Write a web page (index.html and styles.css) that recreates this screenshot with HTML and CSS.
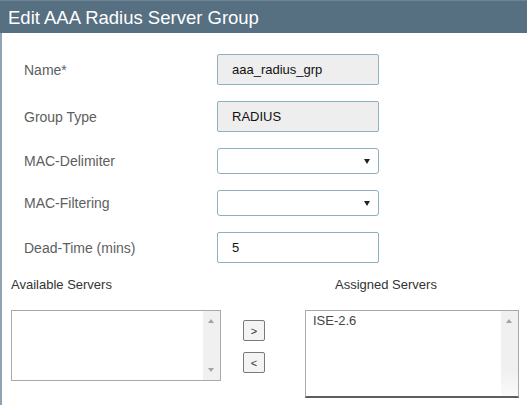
FILE: index.html
```html
<!DOCTYPE html>
<html lang="en">
<head>
    <meta charset="UTF-8">
    <title>Edit AAA Radius Server Group</title>
    <link rel="stylesheet" href="styles.css">
</head>
<body>
<div class="dialog">
    <div class="title">Edit AAA Radius Server Group</div>
    <div class="content">
        <form class="fields" action="#">
            <label for="name">Name*</label>
            <input class="field locked" id="name" type="text" value="aaa_radius_grp" readonly>

            <label for="groupType">Group Type</label>
            <input class="field locked" id="groupType" type="text" value="RADIUS" readonly>

            <label for="macDelimiter">MAC-Delimiter</label>
            <div class="select-wrap">
                <select class="select" id="macDelimiter"><option></option></select>
            </div>

            <label for="macFiltering">MAC-Filtering</label>
            <div class="select-wrap">
                <select class="select" id="macFiltering"><option></option></select>
            </div>

            <label for="deadTime">Dead-Time (mins)</label>
            <input class="field" id="deadTime" type="text" value="5">
        </form>

        <div class="servers">
            <div class="col-left">
                <p class="list-title">Available Servers</p>
                <div class="listbox short">
                    <div class="items"></div>
                    <div class="scrollbar">
                        <span class="arrow up"></span>
                        <span class="arrow down"></span>
                    </div>
                </div>
            </div>
            <div class="col-mid">
                <button class="move" type="button">&gt;</button>
                <button class="move" type="button">&lt;</button>
            </div>
            <div class="col-right">
                <p class="list-title assigned">Assigned Servers</p>
                <div class="listbox tall">
                    <div class="items">
                        <div class="item">ISE-2.6</div>
                    </div>
                    <div class="scrollbar">
                        <span class="arrow up"></span>
                    </div>
                </div>
            </div>
        </div>
    </div>
</div>
</body>
</html>
```

FILE: styles.css
```css
* {
    margin: 0;
    padding: 0;
    box-sizing: border-box;
}

body {
    background: #ffffff;
    font-family: "Liberation Sans", Arial, sans-serif;
    color: #333333;
}

.dialog {
    width: 527px;
    height: 405px;
    display: flex;
    flex-direction: column;
}

.title {
    height: 33px;
    padding: 6px 0 0 8px;
    background: #566f81;
    border-top: 1px solid #6d8494;
    color: #ffffff;
    font-size: 18.5px;
    line-height: 22px;
}

.content {
    flex: auto;
    border-left: 2px solid #8fa3b3;
}

/* form rows */
.fields {
    display: grid;
    grid-template-columns: 193px 162px;
    row-gap: 16px;
    align-items: center;
    padding: 21px 0 0 22px;
}

.fields label {
    font-size: 14px;
    color: #5d5e60;
}

.field {
    width: 162px;
    height: 31px;
    padding-left: 14px;
    border: 1px solid #8fb0c3;
    border-radius: 2px;
    background: #ffffff;
    font: 13px "Liberation Sans", Arial, sans-serif;
    color: #111111;
    outline: none;
}

.field.locked {
    background: #eeeeee;
}

.select-wrap {
    position: relative;
    width: 162px;
    height: 26px;
}

.select {
    width: 100%;
    height: 100%;
    -webkit-appearance: none;
    appearance: none;
    border: 1px solid #8fb0c3;
    border-radius: 3px;
    background: #ffffff;
    outline: none;
}

.select-wrap::after {
    content: "";
    position: absolute;
    right: 9px;
    top: 11px;
    border-left: 3.5px solid transparent;
    border-right: 3.5px solid transparent;
    border-top: 5px solid #222222;
    pointer-events: none;
}

/* server lists */
.servers {
    display: flex;
    margin-top: 14px;
}

.list-title {
    height: 16px;
    font-size: 13px;
    line-height: 16px;
    color: #333333;
    margin-bottom: 17px;
}

.list-title.assigned {
    padding-left: 30px;
}

.col-left {
    width: 210px;
    margin-left: 9px;
}

.col-mid {
    width: 84px;
    padding: 43px 0 0 22px;
    display: flex;
    flex-direction: column;
    gap: 11px;
}

.col-right {
    width: 214px;
}

.listbox {
    display: flex;
    border: 1px solid #a9a9a9;
    background: #ffffff;
}

.listbox.short {
    height: 71px;
}

.listbox.tall {
    height: 88px;
    border-bottom: 2px solid #5e5e5e;
}

.items {
    flex: auto;
    padding: 2px 0 0 7px;
}

.item {
    font-size: 13px;
    line-height: 16px;
    color: #444444;
}

.scrollbar {
    position: relative;
    width: 17px;
    background: #f0f0f0;
}

.tall .scrollbar {
    background: linear-gradient(#f0f0f0 70%, #fafafa);
}

.arrow {
    position: absolute;
    left: 5px;
    border-left: 3.5px solid transparent;
    border-right: 3.5px solid transparent;
}

.arrow.up {
    top: 8px;
    border-bottom: 4px solid #a3a3a3;
}

.arrow.down {
    bottom: 8px;
    border-top: 4px solid #a3a3a3;
}

.move {
    width: 22px;
    height: 21px;
    border: 1px solid #7a7a7a;
    border-radius: 2px;
    background: #f4f4f4;
    font: 11px "Liberation Sans", Arial, sans-serif;
    color: #333333;
}
```
